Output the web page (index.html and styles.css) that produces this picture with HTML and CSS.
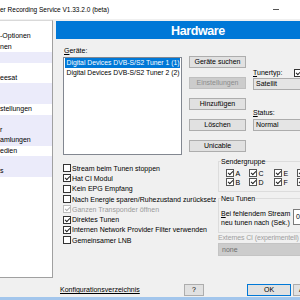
FILE: index.html
```html
<!DOCTYPE html>
<html lang="de">
<head>
  <meta charset="UTF-8">
  <meta name="viewport" content="width=device-width, initial-scale=1.0">
  <title>Recording Service - Hardware</title>
  <link rel="stylesheet" href="styles.css">
</head>
<body>
  <div class="screen">
    <header class="titlebar">
      <span class="title">er Recording Service V1.33.2.0 (beta)</span>
      <span class="minimize"></span>
    </header>

    <div class="content">
      <nav class="sidebar">
        <div class="nav-row"></div>
        <div class="nav-row">-Optionen</div>
        <div class="nav-row">nen</div>
        <div class="nav-row alt"></div>
        <div class="nav-row"></div>
        <div class="nav-row">eesat</div>
        <div class="nav-row alt"></div>
        <div class="nav-row alt"></div>
        <div class="nav-row">stellungen</div>
        <div class="nav-row alt"></div>
        <div class="nav-row alt">r</div>
        <div class="nav-row alt">amlungen</div>
        <div class="nav-row">edien</div>
        <div class="nav-row alt"></div>
        <div class="nav-row alt">s</div>
      </nav>

      <main class="panel">
        <div class="banner">Hardware</div>

        <div class="top">
          <div class="devices">
            <div class="label"><u>G</u>eräte:</div>
            <div class="listbox">
              <div class="list-item selected">Digital Devices DVB-S/S2 Tuner 1 (1)</div>
              <div class="list-item">Digital Devices DVB-S/S2 Tuner 2 (2)</div>
            </div>
          </div>
          <div class="actions">
            <button class="btn">Geräte suchen</button>
            <button class="btn" disabled>Einstellungen</button>
            <button class="btn">Hinzufügen</button>
            <button class="btn">Löschen</button>
            <button class="btn">Unicable</button>
          </div>
          <div class="props">
            <div class="prop-row">
              <span class="prop-label"><u>T</u>unertyp:</span>
              <span class="cb on"></span>
            </div>
            <div class="combo">Satellit</div>
            <div class="prop-label status"><u>S</u>tatus:</div>
            <div class="combo">Normal</div>
          </div>
        </div>

        <div class="bottom">
          <div class="checks">
            <div class="check"><span class="cb"></span>Stream beim Tunen stoppen</div>
            <div class="check"><span class="cb on"></span>Hat CI Modul</div>
            <div class="check"><span class="cb"></span>Kein EPG Empfang</div>
            <div class="check"><span class="cb"></span>Nach Energie sparen/Ruhezustand zurücksetzen</div>
            <div class="check off"><span class="cb on"></span>Ganzen Transponder öffnen</div>
            <div class="check"><span class="cb on"></span>Direktes Tunen</div>
            <div class="check"><span class="cb on"></span>Internen Network Provider Filter verwenden</div>
            <div class="check"><span class="cb"></span>Gemeinsamer LNB</div>
          </div>

          <div class="groups">
            <fieldset class="group sender">
              <legend>Sendergruppe</legend>
              <div class="sender-grid">
                <div class="check"><span class="cb on"></span>A</div>
                <div class="check"><span class="cb on"></span>B</div>
                <div class="check"><span class="cb on"></span>C</div>
                <div class="check"><span class="cb on"></span>D</div>
                <div class="check"><span class="cb on"></span>E</div>
                <div class="check"><span class="cb on"></span>F</div>
                <div class="check"><span class="cb on"></span></div>
                <div class="check"><span class="cb on"></span></div>
              </div>
            </fieldset>

            <fieldset class="group retune">
              <legend>Neu Tunen</legend>
              <div class="retune-row">
                <div class="retune-text"><u>B</u>ei fehlendem Stream<br>neu tunen nach (Sek.)</div>
                <div class="spin">0</div>
              </div>
            </fieldset>

            <div class="ext-label">Externes CI (experimentell)</div>
            <div class="combo disabled">none</div>
          </div>
        </div>
      </main>
    </div>

    <footer class="footer">
      <a class="link" href="#">Konfigurationsverzeichnis</a>
      <button class="btn help">?</button>
      <button class="btn ok">OK</button>
      <button class="btn cancel">Abbrechen</button>
    </footer>
    <div class="taskbar"></div>
  </div>
</body>
</html>
```

FILE: styles.css
```css
* {
  box-sizing: border-box;
}
body {
  margin: 0;
  font-family: "Liberation Sans", Arial, sans-serif;
  font-size: 7px;
  color: #000;
  background-color: #f0f0f0;
}
.screen {
  width: 300px;
  height: 300px;
  overflow: hidden;
  display: flex;
  flex-direction: column;
}

/* title bar */
.titlebar {
  height: 19px;
  flex-shrink: 0;
  display: flex;
  align-items: center;
  background-color: #fff;
  font-size: 6.5px;
}
.title {
  white-space: nowrap;
}
.minimize {
  width: 6px;
  height: 1px;
  margin-left: auto;
  margin-right: 21px;
  background-color: #555;
}

/* window body */
.content {
  height: 259px;
  flex-shrink: 0;
  display: flex;
  padding-top: 1px;
}
.sidebar {
  width: 53px;
  flex-shrink: 0;
  background-color: #fff;
  border-top: 1px solid #d9d9d9;
  border-right: 1px solid #a0a0a0;
  border-bottom: 1px solid #a0a0a0;
}
.nav-row {
  height: 10.4px;
  line-height: 10.4px;
  white-space: nowrap;
  overflow: hidden;
}
.nav-row.alt {
  background-color: #ebebfa;
}
.panel {
  width: 300px;
  flex-shrink: 0;
}
.banner {
  height: 18px;
  margin: 1px 0 0 3px;
  padding: 2px 0 0 115px;
  background-color: #0078d7;
  color: #fff;
  font-weight: bold;
  font-size: 12.5px;
  letter-spacing: -0.4px;
  line-height: 16px;
}

/* devices, buttons, tuner type */
.top {
  display: flex;
  align-items: flex-start;
}
.devices {
  width: 119px;
  margin-left: 10px;
  padding-top: 8px;
  flex-shrink: 0;
}
.label {
  height: 8px;
  line-height: 8px;
  padding-left: 1px;
}
.listbox {
  height: 98px;
  margin-top: 2px;
  padding: 0 1px;
  background-color: #fff;
  border: 1px solid #828790;
}
.list-item {
  height: 9.6px;
  padding-left: 1.5px;
  font-size: 6.8px;
  line-height: 9.6px;
  white-space: nowrap;
  overflow: hidden;
}
.list-item.selected {
  background-color: #0078d7;
  color: #fff;
}
.actions {
  width: 57px;
  margin-left: 7px;
  padding-top: 17px;
  flex-shrink: 0;
  display: flex;
  flex-direction: column;
  gap: 9px;
}
.btn {
  height: 12px;
  padding: 0;
  font: inherit;
  line-height: 10px;
  color: #000;
  background-color: #e1e1e1;
  border: 1px solid #adadad;
  white-space: nowrap;
}
.btn:disabled {
  color: #8c8c8c;
  background-color: #cccccc;
  border-color: #bfbfbf;
}
.props {
  width: 80px;
  margin-left: 7px;
  padding-top: 29px;
  flex-shrink: 0;
}
.prop-row {
  height: 9px;
  display: flex;
  align-items: center;
}
.prop-label {
  width: 41px;
  line-height: 9px;
}
.combo {
  height: 12px;
  margin-top: 1px;
  padding-left: 2px;
  line-height: 10px;
  background-color: #e5e5e5;
  border: 1px solid #acacac;
  white-space: nowrap;
}
.prop-label.status {
  margin-top: 18px;
}
.status + .combo {
  margin-top: 2px;
}

/* options */
.bottom {
  display: flex;
  align-items: flex-start;
}
.checks {
  width: 153px;
  margin-left: 10px;
  padding-top: 8px;
  flex-shrink: 0;
  overflow: hidden;
}
.check {
  height: 10.3px;
  display: flex;
  align-items: center;
  white-space: nowrap;
}
.check.off {
  color: #9a9a9a;
}
.cb {
  position: relative;
  width: 8px;
  height: 8px;
  margin-right: 1px;
  flex-shrink: 0;
  background-color: #fff;
  border: 1px solid #333;
}
.cb.on::after {
  content: "";
  position: absolute;
  left: 1px;
  top: 1px;
  width: 4px;
  height: 2px;
  border-left: 1px solid #222;
  border-bottom: 1px solid #222;
  transform: rotate(-45deg);
}
.check.off .cb {
  border-color: #bcbcbc;
}
.check.off .cb::after {
  border-color: #b0b0b0;
}

/* group boxes */
.groups {
  width: 90px;
  margin-left: 2px;
  padding-top: 2.5px;
  flex-shrink: 0;
}
.group {
  margin: 0;
  padding: 0 0 0 2px;
  border: 1px solid #dcdcdc;
}
.group legend {
  padding: 0;
  line-height: 8px;
}
.sender-grid {
  display: grid;
  grid-template-columns: 23px 25px 23px 23px;
  grid-template-rows: 8.7px 8.7px;
  grid-auto-flow: column;
  margin: 3.5px 0 4.6px 5px;
}
.sender-grid .check {
  height: 8.7px;
}
.sender-grid .cb {
  border-color: #555;
  margin-right: 1.5px;
}
.retune {
  margin-top: 3px;
  padding-bottom: 5px;
}
.retune-row {
  margin-top: 6px;
  display: flex;
  align-items: flex-start;
}
.retune-text {
  width: 72px;
  line-height: 9px;
  flex-shrink: 0;
}
.spin {
  width: 20px;
  height: 16px;
  margin-top: 0.5px;
  padding-left: 2px;
  line-height: 14px;
  background-color: #fff;
  border: 1px solid #7a7a7a;
}
.ext-label {
  margin-top: 1.5px;
  line-height: 8px;
  letter-spacing: -0.15px;
  color: #a0a0a0;
  white-space: nowrap;
}
.combo.disabled {
  height: 13px;
  padding-left: 3px;
  line-height: 11px;
  color: #6d6d6d;
  background-color: #cccccc;
  border-color: #c4c4c4;
}

/* footer */
.footer {
  height: 19px;
  flex-shrink: 0;
  display: flex;
  align-items: flex-start;
  padding: 6px 0 0 60px;
}
.link {
  width: 124px;
  flex-shrink: 0;
  line-height: 12px;
  color: #000;
  text-decoration: underline;
  white-space: nowrap;
}
.help {
  width: 20px;
  flex-shrink: 0;
}
.ok {
  width: 44px;
  margin-left: 43px;
  flex-shrink: 0;
  border-color: #0078d7;
}
.cancel {
  width: 44px;
  margin-left: 2px;
  flex-shrink: 0;
  text-align: left;
  padding-left: 5px;
}
.taskbar {
  height: 3px;
  flex-shrink: 0;
  background-color: #a3c6ec;
}
```
